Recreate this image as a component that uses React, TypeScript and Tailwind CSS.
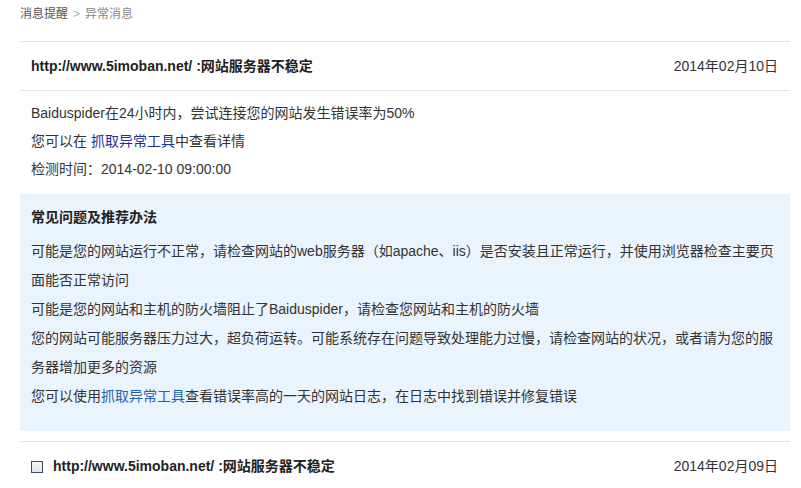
import React from 'react';

const font = "font-['Liberation_Sans','Noto_Sans_CJK_SC',sans-serif]";

const Row = ({ title, date, check }: { title: string; date: string; check?: boolean }) => (
    <div className="flex items-center justify-between pl-[11px] pr-[12px] h-full">
        <div className="flex items-center gap-[10px]">
            {check && (
                <span className="w-[12px] h-[12px] border border-[#3d4d5f] bg-gradient-to-b from-[#f4f4f4] to-[#e2e5ea]" />
            )}
            <span className="font-bold text-[14px] text-[#222]">{title}</span>
        </div>
        <span className="text-[14px] text-[#333]">{date}</span>
    </div>
);

export default function App() {
    return (
        <div className={`w-[801px] h-[488px] overflow-hidden bg-white text-[#333] ${font}`}>
            <div className="pl-[20px] pr-[11px]">
                {/* breadcrumb */}
                <div className="h-[42px] border-b border-[#e3e3e3] text-[12px] leading-[28px]">
                    <span className="text-[#555]">消息提醒</span>
                    <span className="text-[#aaa] mx-[5px]">&gt;</span>
                    <span className="text-[#888]">异常消息</span>
                </div>

                <div className="h-[49px] border-b border-[#e3e3e3]">
                    <Row title="http://www.5imoban.net/ :网站服务器不稳定" date="2014年02月10日" />
                </div>

                <div className="pl-[11px] pt-[8px] mb-[11px] text-[14px] leading-[28px]">
                    <p>Baiduspider在24小时内，尝试连接您的网站发生错误率为50%</p>
                    <p>
                        您可以在 <a className="text-[#1c2f9c]">抓取异常工具</a>中查看详情
                    </p>
                    <p>检测时间：2014-02-10 09:00:00</p>
                </div>

                {/* tips */}
                <div className="bg-[#e9f4fd] pl-[11px] pr-[14px] pt-[9px] pb-[20px] text-[14px] leading-[28px]">
                    <h4 className="font-bold text-[#222]">常见问题及推荐办法</h4>
                    <div className="mt-[6px] leading-[29px]">
                        <p>
                            可能是您的网站运行不正常，请检查网站的web服务器（如apache、iis）是否安装且正常运行，并使用浏览器检查主要页
                            <br />
                            面能否正常访问
                        </p>
                        <p>可能是您的网站和主机的防火墙阻止了Baiduspider，请检查您网站和主机的防火墙</p>
                        <p>
                            您的网站可能服务器压力过大，超负荷运转。可能系统存在问题导致处理能力过慢，请检查网站的状况，或者请为您的服
                            <br />
                            务器增加更多的资源
                        </p>
                        <p>
                            您可以使用<a className="text-[#2462ae]">抓取异常工具</a>查看错误率高的一天的网站日志，在日志中找到错误并修复错误
                        </p>
                    </div>
                </div>

                <div className="mt-[10px] h-[50px] border-t border-[#e3e3e3]">
                    <Row title="http://www.5imoban.net/ :网站服务器不稳定" date="2014年02月09日" check />
                </div>
            </div>
        </div>
    );
}
